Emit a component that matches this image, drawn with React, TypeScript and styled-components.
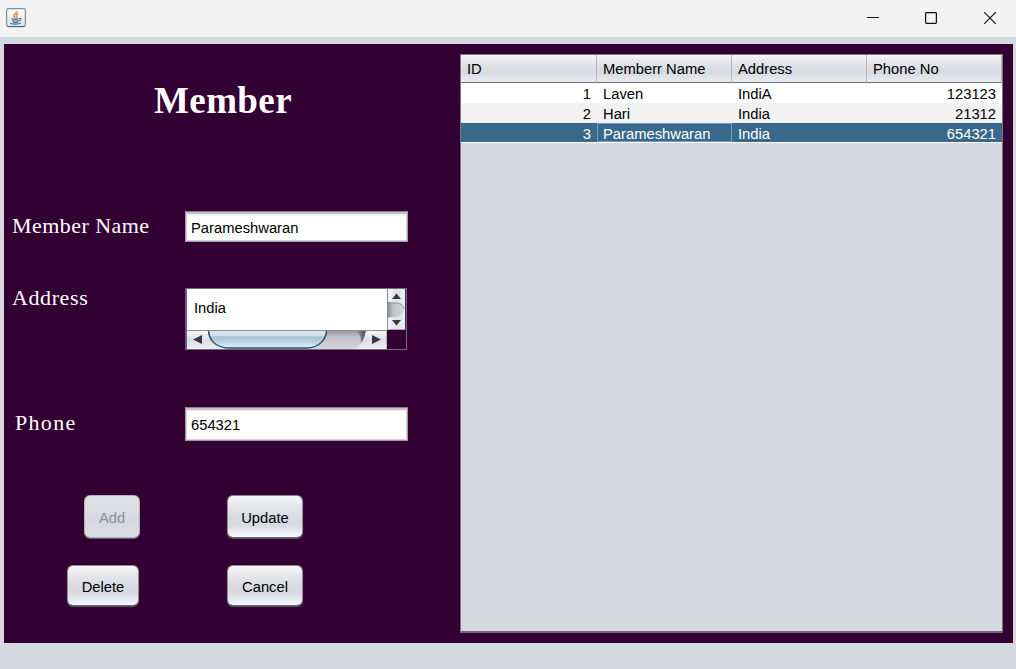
import React from "react";
import styled, { createGlobalStyle } from "styled-components";

const GlobalStyle = createGlobalStyle`
  * { box-sizing: border-box; }
  body { margin: 0; background: #d6d9df; overflow: hidden; }
`;

const Window = styled.div`
  width: 1016px;
  height: 669px;
  display: flex;
  flex-direction: column;
  background: #d6d9e0;
  font: 14.75px/20px "Liberation Sans", Arial, sans-serif;
  color: #000;
`;

const TitleBar = styled.header`
  height: 37px;
  flex: none;
  display: flex;
  align-items: center;
  justify-content: space-between;
  padding: 0 19px 2px 6px;
  background: #f3f3f3;
`;

const WindowControls = styled.div`
  display: flex;
  gap: 45px;
  svg { display: block; }
`;

const Panel = styled.main`
  margin: 7px 3px 0 4px;
  height: 599px;
  display: flex;
  background: #330033;
`;

const Form = styled.form`
  width: 456px;
  flex: none;
  display: flex;
  flex-direction: column;
`;

const Heading = styled.h1`
  margin: 35px 0 0 150px;
  height: 44px;
  font: bold 37px/44px "Liberation Serif", "Times New Roman", serif;
  letter-spacing: 0.4px;
  color: #fff;
  white-space: nowrap;
`;

const Field = styled.div<{ $top: number; $height: number }>`
  display: flex;
  margin-top: ${(p) => p.$top}px;
  height: ${(p) => p.$height}px;
`;

const Label = styled.label<{ $indent: number; $offset?: number; $spacing: number }>`
  width: 181px;
  flex: none;
  padding-left: ${(p) => p.$indent}px;
  margin-top: ${(p) => p.$offset ?? 0}px;
  font: 22px/30px "Liberation Serif", "Times New Roman", serif;
  letter-spacing: ${(p) => p.$spacing}px;
  color: #fff;
  white-space: nowrap;
`;

const TextInput = styled.input<{ $drop: number }>`
  width: 223px;
  height: 100%;
  padding: ${(p) => p.$drop}px 5px 0;
  border: 1px solid #a69aa8;
  border-top-color: #87808a;
  outline: none;
  background: #fff;
  box-shadow: inset 0 2px 1px #c4c4c4, inset 0 3px 2px #e8e8e8, inset 0 0 0 1px #d5d3d6;
  font: inherit;
  color: #000;
`;

const ScrollPane = styled.div`
  width: 222px;
  height: 62px;
  display: grid;
  grid-template: 41px 19px / 200px 19px;
  border: 1px solid #706a80;
  border-left: 2px solid #67607a;
`;

const TextArea = styled.div`
  padding: 9px 7px;
  background: #fff;
`;

const ButtonRow = styled.div<{ $top: number; $left: number; $gap: number }>`
  display: flex;
  margin: ${(p) => p.$top}px 0 0 ${(p) => p.$left}px;
  gap: ${(p) => p.$gap}px;
`;

const Button = styled.button<{ $width: number; $height: number }>`
  width: ${(p) => p.$width}px;
  height: ${(p) => p.$height}px;
  padding: 2px 0 0;
  border: 1px solid #8d8891;
  border-bottom-color: #666973;
  border-radius: 6px;
  background: linear-gradient(#f8f8fa 0%, #e6e7eb 22%, #d6d9df 58%, #d8dbe1 72%, #f2f5fc 96%);
  box-shadow: 0 1px 1px #615565;
  font: inherit;
  color: #000;

  &:disabled {
    border-color: #b3afb8;
    background: linear-gradient(#e0e3e7, #d6d9df 60%, #dadde3);
    box-shadow: 0 1px 0 #675c6d;
    color: #8e8f91;
  }
`;

const TablePane = styled.section`
  width: 543px;
  height: 579px;
  margin-top: 10px;
  border: 1px solid #777988;
  border-bottom: 2px solid #6f6878;
  background: #d6d9e0;
`;

const Table = styled.div`
  display: grid;
  grid-template-columns: 136px 135px 135px 135px;
  border-bottom: 1px solid #fff;
`;

const HeaderCell = styled.div`
  height: 28px;
  padding: 4px 6px 0;
  border-right: 1px solid #b4b7bf;
  border-bottom: 1px solid #6c707b;
  background: linear-gradient(#fff 0, #eff0f3 2px, #e0e2e7 10px, #d6d9df 17px, #e8ebf1 26px);
  white-space: nowrap;
`;

const Cell = styled.div<{ $row: number; $numeric?: boolean; $focused?: boolean }>`
  height: ${(p) => (p.$row === 2 ? 19 : 20)}px;
  padding: 0 6px;
  line-height: 22px;
  text-align: ${(p) => (p.$numeric ? "right" : "left")};
  color: ${(p) => (p.$row === 2 ? "#fff" : "#000")};
  background: ${(p) => ["#fff", "#f2f2f2", "#39698a"][p.$row]};
  box-shadow: ${(p) => (p.$focused ? "inset 0 0 0 1px #6d9dcb" : "none")};
  white-space: nowrap;
`;

const members = [
  ["1", "Laven", "IndiA", "123123"],
  ["2", "Hari", "India", "21312"],
  ["3", "Parameshwaran", "India", "654321"],
];

const JavaIcon = () => (
  <svg width="20" height="20" viewBox="0 0 20 20">
    <defs>
      <linearGradient id="tile" x2="0" y2="1">
        <stop stopColor="#fff" />
        <stop offset="1" stopColor="#dce3e8" />
      </linearGradient>
    </defs>
    <rect x=".6" y=".6" width="18.800" height="18" rx="1.800" fill="url(#tile)" stroke="#7590a5" strokeWidth="1.200" />
    <path d="M1.500 18.500h17" stroke="#49677f" />
    <path d="M10.800 3c1 2-3.600 3-3 5 .2 1 1.400 1.500 1.600 2.500M12.400 5.700c-2.200 1-2.700 2-1.500 3 .5.6 0 1.100-.6 1.800" fill="none" stroke="#ee8a3c" strokeWidth="1.500" />
    <path d="M5.300 10.500c2 .9 6 .9 8.400 0M6 12.400c2 .8 5 .8 7.200 0M6.800 14.100c1.700.6 4 .6 5.500 0M13.500 10.500c2-.6 2.200 1.400-.3 2.400M4.200 15.300c2.500 1.300 8.800 1 10.900-.3" fill="none" stroke="#547b99" strokeWidth="1.050" />
  </svg>
);

const VerticalBar = () => (
  <svg width="19" height="41" viewBox="0 0 19 41">
    <defs>
      <linearGradient id="vface">
        <stop stopColor="#f8f9fb" />
        <stop offset=".55" stopColor="#dcdfe4" />
        <stop offset="1" stopColor="#eceff4" />
      </linearGradient>
      <linearGradient id="vtrack">
        <stop stopColor="#85868b" />
        <stop offset=".35" stopColor="#c0c1c6" />
        <stop offset="1" stopColor="#d9dae0" />
      </linearGradient>
    </defs>
    <path d="M0 0h18v41H0z" fill="url(#vface)" />
    <path d="M.5 0v41" stroke="#8c8e95" />
    <path d="M0 13c3 1 6 1 9 1 4 0 8 3 8 7s-4 7-8 7c-3 0-6 0-9 1z" fill="url(#vtrack)" />
    <path d="M0 13c3 1 6 1 9 1 4 0 7 2 8 6" fill="none" stroke="#898a90" />
    <path d="M5 10 9.500 4.500 14 10zM5 31h9l-4.500 5.500z" fill="#383a3f" />
    <path d="M0 40.500h18" stroke="#a3a5ac" />
    <path d="M18.500 0v41" stroke="#3a2f40" />
  </svg>
);

const HorizontalBar = () => (
  <svg width="200" height="19" viewBox="0 0 200 19">
    <defs>
      <linearGradient id="hface" x2="0" y2="1">
        <stop stopColor="#f8f9fb" />
        <stop offset=".55" stopColor="#dcdfe4" />
        <stop offset="1" stopColor="#eceff4" />
      </linearGradient>
      <linearGradient id="htrack" x2="0" y2="1">
        <stop stopColor="#929398" />
        <stop offset=".35" stopColor="#bfc0c5" />
        <stop offset="1" stopColor="#d7d8df" />
      </linearGradient>
      <linearGradient id="thumb" x2="0" y2="1">
        <stop stopColor="#dce7f0" />
        <stop offset=".3" stopColor="#d3e0ea" />
        <stop offset=".38" stopColor="#a9c3d6" />
        <stop offset=".65" stopColor="#b8d1e2" />
        <stop offset="1" stopColor="#def4ff" />
      </linearGradient>
      <linearGradient id="hshade">
        <stop stopColor="#333" stopOpacity="0" />
        <stop offset="1" stopColor="#303136" stopOpacity=".8" />
      </linearGradient>
    </defs>
    <path d="M0 0h200v19H0z" fill="url(#hface)" />
    <path d="M21 0h158c-1 3-1 7-3 10-2 4-4 7-8 9H42C28 18 21 12 21 0z" fill="url(#htrack)" />
    <path d="M168 0h11c-1 3-1 7-3 10l-2 3c0-5-1-10-6-13z" fill="url(#hshade)" />
    <path d="M21.500 0c0 9 7 18 20 18h78c13 0 20-9 20-18z" fill="url(#thumb)" stroke="#2e4d67" strokeWidth="1.400" />
    <path d="M15 5v9L6 9.500zM185 5v9l9-4.500z" fill="#383a3f" />
    <path d="M0 .5h200" stroke="#8b9098" />
    <path d="M199.500 0v19" stroke="#b4b6bc" />
  </svg>
);

export default function App() {
  return (
    <>
      <GlobalStyle />
      <Window>
        <TitleBar>
          <JavaIcon />
          <WindowControls>
            <svg width="14" height="14"><path d="M2 6.500h12" stroke="#111" /></svg>
            <svg width="14" height="14"><rect x="1.600" y="1.600" width="10.800" height="10.800" rx=".8" fill="none" stroke="#111" strokeWidth="1.200" /></svg>
            <svg width="14" height="14"><path d="m1.200 1.200 11.600 11.600M12.800 1.200 1.200 12.800" stroke="#111" strokeWidth="1.150" /></svg>
          </WindowControls>
        </TitleBar>
        <Panel>
          <Form>
            <Heading>Member</Heading>
            <Field $top={88} $height={31}>
              <Label $indent={8} $spacing={0.45} htmlFor="name">Member Name</Label>
              <TextInput id="name" $drop={3} defaultValue="Parameshwaran" />
            </Field>
            <Field $top={46} $height={62}>
              <Label $indent={8} $offset={-5} $spacing={0.6}>Address</Label>
              <ScrollPane>
                <TextArea>India</TextArea>
                <VerticalBar />
                <HorizontalBar />
              </ScrollPane>
            </Field>
            <Field $top={57} $height={34}>
              <Label $indent={11} $offset={1} $spacing={1.3} htmlFor="phone">Phone</Label>
              <TextInput id="phone" $drop={1} defaultValue="654321" />
            </Field>
            <ButtonRow $top={54} $left={80} $gap={87}>
              <Button type="button" $width={56} $height={43} disabled>Add</Button>
              <Button type="button" $width={76} $height={43}>Update</Button>
            </ButtonRow>
            <ButtonRow $top={27} $left={63} $gap={88}>
              <Button type="button" $width={72} $height={41}>Delete</Button>
              <Button type="button" $width={76} $height={41}>Cancel</Button>
            </ButtonRow>
          </Form>
          <TablePane>
            <Table>
              {["ID", "Memberr Name", "Address", "Phone No"].map((title) => (
                <HeaderCell key={title}>{title}</HeaderCell>
              ))}
              {members.map((member, row) =>
                member.map((value, column) => (
                  <Cell
                    key={`${row}-${column}`}
                    $row={row}
                    $numeric={column === 0 || column === 3}
                    $focused={row === 2 && column === 1}
                  >
                    {value}
                  </Cell>
                ))
              )}
            </Table>
          </TablePane>
        </Panel>
      </Window>
    </>
  );
}
